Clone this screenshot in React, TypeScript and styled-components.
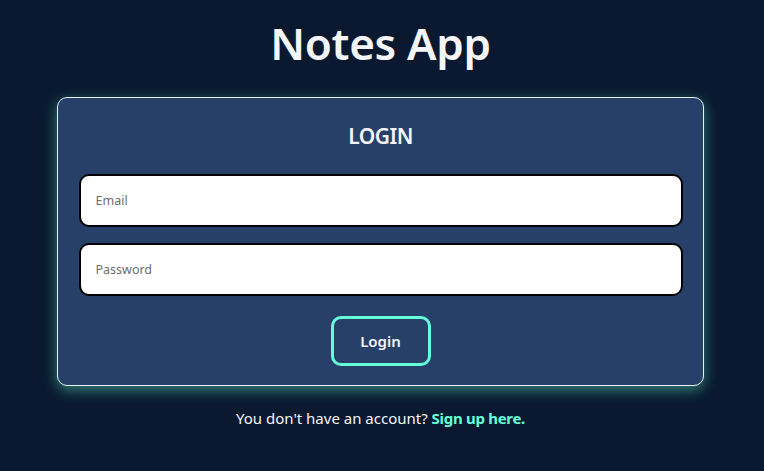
import React from "react";
import styled, { createGlobalStyle } from "styled-components";

const Global = createGlobalStyle`
  html, body { margin: 0; padding: 0; background: #0a192f; }
  body { font-family: "Noto Sans", "Open Sans", sans-serif; }
  * { box-sizing: border-box; }
`;

const Page = styled.main`
  min-height: 471px;
  display: flex;
  flex-direction: column;
  align-items: center;
  padding: 13px 3px 0 0;
`;

const Title = styled.h1`
  margin: 0;
  color: #f4f6fa;
  font-size: 44px;
  font-weight: 600;
  line-height: 60px;
  letter-spacing: -0.3px;
`;

const Card = styled.form`
  margin-top: 24px;
  width: 647px;
  padding: 20px 20px 19px;
  border: 1px solid #e8f2f6;
  border-radius: 10px;
  background: #27406a;
  box-shadow: 0 4px 14px rgba(100, 255, 218, 0.45);
  display: flex;
  flex-direction: column;
  align-items: center;
`;

const CardTitle = styled.h2`
  margin: 3px 0 0;
  color: #f4f6fa;
  font-size: 21px;
  font-weight: 600;
  line-height: 30px;
  letter-spacing: -0.5px;
`;

const Input = styled.input<{ $gap: number }>`
  width: 604px;
  height: 53px;
  margin-top: ${(p) => p.$gap}px;
  border: 2px solid #000;
  border-radius: 10px;
  background: #fff;
  padding: 0 15px;
  font-family: inherit;
  font-size: 12.5px;
  color: #222;
  outline: none;
  &::placeholder { color: #6d6d6d; }
`;

const Button = styled.button`
  margin-top: 20px;
  width: 100px;
  height: 50px;
  border: 3px solid #64ffda;
  border-radius: 10px;
  background: transparent;
  color: #f4f6fa;
  font-family: inherit;
  font-size: 15px;
  font-weight: 600;
  cursor: pointer;
`;

const Footer = styled.p`
  margin: 20px 0 0;
  color: #f4f6fa;
  font-size: 15px;
  line-height: 24px;
`;

const Link = styled.a`
  color: #64ffda;
  font-weight: 700;
  text-decoration: none;
  letter-spacing: -0.3px;
`;

export default function App() {
  return (
    <>
      <Global />
      <Page>
        <Title>Notes App</Title>
        <Card onSubmit={(e) => e.preventDefault()}>
          <CardTitle>LOGIN</CardTitle>
          <Input $gap={23} type="email" placeholder="Email" />
          <Input $gap={16} type="password" placeholder="Password" />
          <Button type="submit">Login</Button>
        </Card>
        <Footer>
          You don't have an account? <Link href="#">Sign up here.</Link>
        </Footer>
      </Page>
    </>
  );
}
